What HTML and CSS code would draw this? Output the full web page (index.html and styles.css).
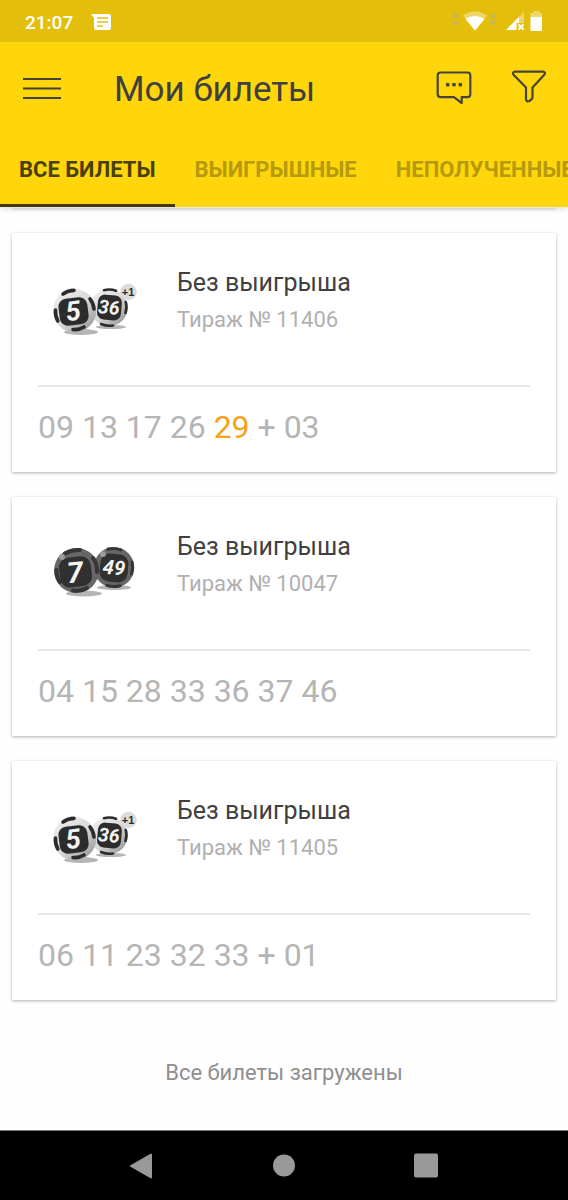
FILE: index.html
```html
<!DOCTYPE html>
<html lang="ru">
<head>
<meta charset="utf-8">
<meta name="viewport" content="width=device-width, initial-scale=1">
<title>Мои билеты</title>
<link rel="stylesheet" href="styles.css">
</head>
<body>
<svg class="defs" aria-hidden="true">
  <defs>
    <linearGradient id="lightBall" x1="0" y1="0" x2="1" y2="1">
      <stop offset="0" stop-color="#f2f2f2"/>
      <stop offset="0.5" stop-color="#dadada"/>
      <stop offset="1" stop-color="#8c8c8c"/>
    </linearGradient>
    <symbol id="logo536" viewBox="0 0 110 70">
      <ellipse cx="41" cy="57" rx="17" ry="3" fill="#b5b5b5"/>
      <ellipse cx="71" cy="52" rx="15" ry="2" fill="#b5b5b5"/>
      <circle cx="69" cy="32.5" r="18.7" fill="url(#lightBall)"/>
      <g fill="none" stroke="#2c2c2c" stroke-width="2.6" stroke-linecap="round">
        <path d="M64 15.200q6-1.600 12 .5M85.800 27q1.500 5-.3 11M61 49q6 2.500 12 1.500"/>
      </g>
      <rect x="57.500" y="20" width="24" height="25" rx="7" fill="#2c2c2c" transform="rotate(5 69 32)"/>
      <circle cx="34.500" cy="35.700" r="21.700" fill="url(#lightBall)"/>
      <g fill="none" stroke="#2c2c2c" stroke-width="3.600" stroke-linecap="round">
        <path d="M23 19q5-3.500 11-3.600M50 24q3.500 4.500 4 10M15.500 35q-.4 6 2.300 11M33 54.500q6 .6 11-2.500"/>
      </g>
      <rect x="19" y="23" width="29" height="27" rx="8" fill="#2c2c2c" transform="rotate(-7 33 36)"/>
      <text class="ball-number" x="33" y="45.500" font-size="27" transform="rotate(-7 33 36)">5</text>
      <text class="ball-number" x="69" y="39" font-size="19" transform="rotate(5 69 32)">36</text>
      <circle cx="88.500" cy="17" r="8.300" fill="#dcdcdc"/>
      <text class="ball-plus" x="88" y="21" font-size="11">+1</text>
    </symbol>
    <symbol id="logo749" viewBox="0 0 110 70">
      <ellipse cx="44" cy="54.500" rx="18" ry="3" fill="#b5b5b5"/>
      <ellipse cx="74" cy="48.500" rx="17" ry="2.500" fill="#b5b5b5"/>
      <circle cx="74" cy="28.500" r="20.300" fill="#676767"/>
      <g fill="none" stroke="#363636" stroke-width="3" stroke-linecap="round">
        <path d="M68 10q7-1.500 13 1M92 23q1.500 6-.5 12M67 46.500q7 2 13 .3"/>
      </g>
      <rect x="60" y="15" width="28" height="28" rx="9" fill="#303030" transform="rotate(5 74 29)"/>
      <circle cx="36.500" cy="31.500" r="22.500" fill="#676767"/>
      <g fill="none" stroke="#363636" stroke-width="4" stroke-linecap="round">
        <path d="M25 14.500q7-4 15-3.500M53 19q4.500 6 4 14M16.500 31q-.2 7 3.500 12M33 51.500q8 1 14-2.500"/>
      </g>
      <rect x="19.500" y="18" width="32" height="30" rx="10" fill="#303030" transform="rotate(-7 35 33)"/>
      <circle cx="22" cy="18" r="3" fill="#9a9a9a"/>
      <circle cx="63" cy="15" r="3" fill="#9a9a9a"/>
      <text class="ball-number" x="35" y="43.500" font-size="29" transform="rotate(-5 35 33)">7</text>
      <text class="ball-number" x="74" y="35.500" font-size="20" transform="rotate(5 74 29)">49</text>
    </symbol>
  </defs>
</svg>

<header class="app-header">
  <div class="status-bar">
    <span class="clock">21:07</span>
    <svg class="message-icon" width="20" height="18" viewBox="0 0 20 18" aria-hidden="true">
      <path fill="#fff" d="M0 1h17.500Q20 1 20 3.500v11q0 2.500-2.500 2.500h-12Q3 17 3 14.500V5Z"/>
      <path stroke="#e4be0c" stroke-width="1.400" d="M6 5h11M6 9h11M6 13h6"/>
    </svg>
    <svg class="signal-icons" width="92" height="22" viewBox="0 0 92 22" aria-hidden="true">
      <path fill="#c9b559" d="M0 7l3.500-6L7 7zM0 10h7l-3.500 6zM37.500 7L41 1l3.500 6zM37.500 10h7L41 16z"/>
      <path fill="#efd66b" d="M11 4.500q12-8 24 0l-12 15z"/>
      <path fill="#fff" d="M13.500 8q9.500-6 19 0L23 19.500z"/>
      <path fill="#efd66b" d="M72 1v11h-8v7H54z"/>
      <path fill="#fff" d="M67 6v6h-2.500v7H54z"/>
      <path stroke="#fff" stroke-width="2" d="M66.500 13.500l5 5m0-5l-5 5"/>
      <path fill="#efd66b" d="M81.500 0h6v2H90v5H78.500V2h3z"/>
      <path fill="#fff" d="M78.500 6H90v13q0 1-1 1h-9.500q-1 0-1-1z"/>
    </svg>
  </div>
  <div class="toolbar">
    <button class="icon-button" type="button" aria-label="Меню">
      <svg width="38" height="24" viewBox="0 0 38 24"><path stroke="#454235" stroke-width="2" d="M0 3h38M0 12.500h38M0 22h38"/></svg>
    </button>
    <h1 class="page-title">Мои билеты</h1>
    <button class="icon-button" type="button" aria-label="Сообщения">
      <svg width="36" height="36" viewBox="0 0 36 36">
        <path fill="none" stroke="#444538" stroke-width="2.200" stroke-linejoin="round" d="M4.500 2.500h27q2.800 0 2.800 2.800v19q0 2.800-2.800 2.800h-5.800v6L18 27.100H4.500q-2.800 0-2.800-2.800v-19q0-2.800 2.800-2.800z"/>
        <g fill="#444538"><circle cx="11.700" cy="14.700" r="1.900"/><circle cx="18" cy="14.700" r="1.900"/><circle cx="24.300" cy="14.700" r="1.900"/></g>
      </svg>
    </button>
    <button class="icon-button" type="button" aria-label="Фильтр">
      <svg width="36" height="36" viewBox="0 0 36 36">
        <path fill="none" stroke="#444538" stroke-width="2.200" stroke-linejoin="round" d="M3.500 1.700h29q2.600.8.800 3L21.500 17.500v10q-.3 1.800-3 3.500-3.200 1-3.500-1.500v-12L2.500 4.700q-1.500-2.200 1-3z"/>
      </svg>
    </button>
  </div>
  <nav class="tabs">
    <a class="tab tab-active" href="#all" aria-current="page">ВСЕ БИЛЕТЫ</a>
    <a class="tab" href="#winning">ВЫИГРЫШНЫЕ</a>
    <a class="tab" href="#unclaimed">НЕПОЛУЧЕННЫЕ</a>
  </nav>
</header>

<main class="tickets">
  <div class="ticket-edge"></div>
  <article class="ticket">
    <div class="ticket-head">
      <svg class="ticket-logo" role="img" aria-label="5 из 36 + 1"><use href="#logo536"/></svg>
      <div class="ticket-info">
        <h2 class="ticket-result">Без выигрыша</h2>
        <p class="ticket-draw">Тираж № 11406</p>
      </div>
    </div>
    <p class="ticket-numbers">09 13 17 26 <span class="hit">29</span> + 03</p>
  </article>
  <article class="ticket">
    <div class="ticket-head">
      <svg class="ticket-logo" role="img" aria-label="7 из 49"><use href="#logo749"/></svg>
      <div class="ticket-info">
        <h2 class="ticket-result">Без выигрыша</h2>
        <p class="ticket-draw">Тираж № 10047</p>
      </div>
    </div>
    <p class="ticket-numbers">04 15 28 33 36 37 46</p>
  </article>
  <article class="ticket">
    <div class="ticket-head">
      <svg class="ticket-logo" role="img" aria-label="5 из 36 + 1"><use href="#logo536"/></svg>
      <div class="ticket-info">
        <h2 class="ticket-result">Без выигрыша</h2>
        <p class="ticket-draw">Тираж № 11405</p>
      </div>
    </div>
    <p class="ticket-numbers">06 11 23 32 33 + 01</p>
  </article>
  <p class="list-end">Все билеты загружены</p>
</main>

<footer class="system-nav">
  <button class="icon-button" type="button" aria-label="Назад">
    <svg width="26" height="26" viewBox="0 0 26 26"><path fill="#999" stroke="#999" stroke-width="2" stroke-linejoin="round" d="M22 1.500v23L2 13z"/></svg>
  </button>
  <button class="icon-button" type="button" aria-label="Домой">
    <svg width="26" height="26" viewBox="0 0 26 26"><circle cx="13" cy="12.500" r="11" fill="#999"/></svg>
  </button>
  <button class="icon-button" type="button" aria-label="Недавние">
    <svg width="26" height="26" viewBox="0 0 26 26"><rect x="1" y="0.500" width="24" height="24" rx="2" fill="#999"/></svg>
  </button>
</footer>
</body>
</html>
```

FILE: styles.css
```css
* {
  box-sizing: border-box;
}

body {
  margin: 0;
  min-height: 100vh;
  display: flex;
  flex-direction: column;
  background: #fefefe;
  font-family: Roboto, "Noto Sans", sans-serif;
  color: #404040;
}

h1,
h2,
p {
  margin: 0;
  font-weight: 400;
}

svg {
  display: block;
}

.defs {
  position: absolute;
  width: 0;
  height: 0;
}

.app-header {
  position: relative;
  background: #ffd60c;
  box-shadow: 0 1px 6px rgba(0, 0, 0, 0.16);
}

.status-bar {
  display: flex;
  align-items: center;
  height: 42px;
  padding: 2px 24px 0 25px;
  background: #e4be0c;
  color: #fff;
}

.clock {
  font-size: 19px;
  font-weight: 500;
}

.message-icon {
  margin-left: 18px;
}

.signal-icons {
  margin-left: auto;
}

.toolbar {
  display: flex;
  align-items: center;
  height: 92px;
  padding: 0 21px 0 23px;
}

.icon-button {
  padding: 0;
  border: 0;
  background: none;
  cursor: pointer;
}

.page-title {
  flex: 1;
  margin-left: 53px;
  padding-top: 3px;
  font-size: 35px;
  line-height: 44px;
}

.toolbar .icon-button + .icon-button {
  margin-left: 39px;
}

.tabs {
  display: flex;
  gap: 1px;
  height: 73px;
  overflow-x: auto;
  overflow-y: hidden;
  scrollbar-width: none;
}

.tab {
  flex: none;
  padding: 0 19px;
  font-size: 22px;
  font-weight: 700;
  line-height: 72px;
  color: #b69a09;
  text-decoration: none;
}

.tab-active {
  border-bottom: 3px solid #43390a;
  color: #4a3f08;
}

.tickets {
  flex: 1;
  display: flex;
  flex-direction: column;
  gap: 25px;
  padding: 0 12px;
}

.ticket-edge,
.ticket {
  background: #fff;
  box-shadow: 0 1px 3px rgba(0, 0, 0, 0.3);
}

.ticket-edge {
  height: 1px;
}

.ticket {
  padding: 0 26px;
}

.ticket-head {
  display: flex;
  gap: 27px;
  height: 154px;
  padding-left: 2px;
  border-bottom: 2px solid #e6e6e6;
}

.ticket-logo {
  flex: none;
  width: 110px;
  height: 70px;
  margin-top: 42px;
}

.ball-number {
  fill: #f4f4f4;
  font-family: Roboto, sans-serif;
  font-weight: 700;
  font-style: italic;
  text-anchor: middle;
}

.ball-plus {
  fill: #2c2c2c;
  font-family: "Liberation Sans", sans-serif;
  font-weight: 700;
  text-anchor: middle;
}

.ticket-info {
  padding-top: 31px;
}

.ticket-result {
  font-size: 25px;
  line-height: 37px;
}

.ticket-draw {
  font-size: 22px;
  line-height: 37px;
  color: #b0b0b0;
}

.ticket-numbers {
  padding-bottom: 5px;
  font-size: 32px;
  line-height: 80px;
  color: #b5b5b5;
}

.hit {
  color: #f9a11b;
}

.list-end {
  padding-top: 30px;
  font-size: 22px;
  line-height: 36px;
  text-align: center;
  color: #8f8f8f;
}

.system-nav {
  display: flex;
  justify-content: center;
  align-items: center;
  gap: 116px;
  height: 70px;
  border-top: 1px solid #777;
  background: #000;
}
```
